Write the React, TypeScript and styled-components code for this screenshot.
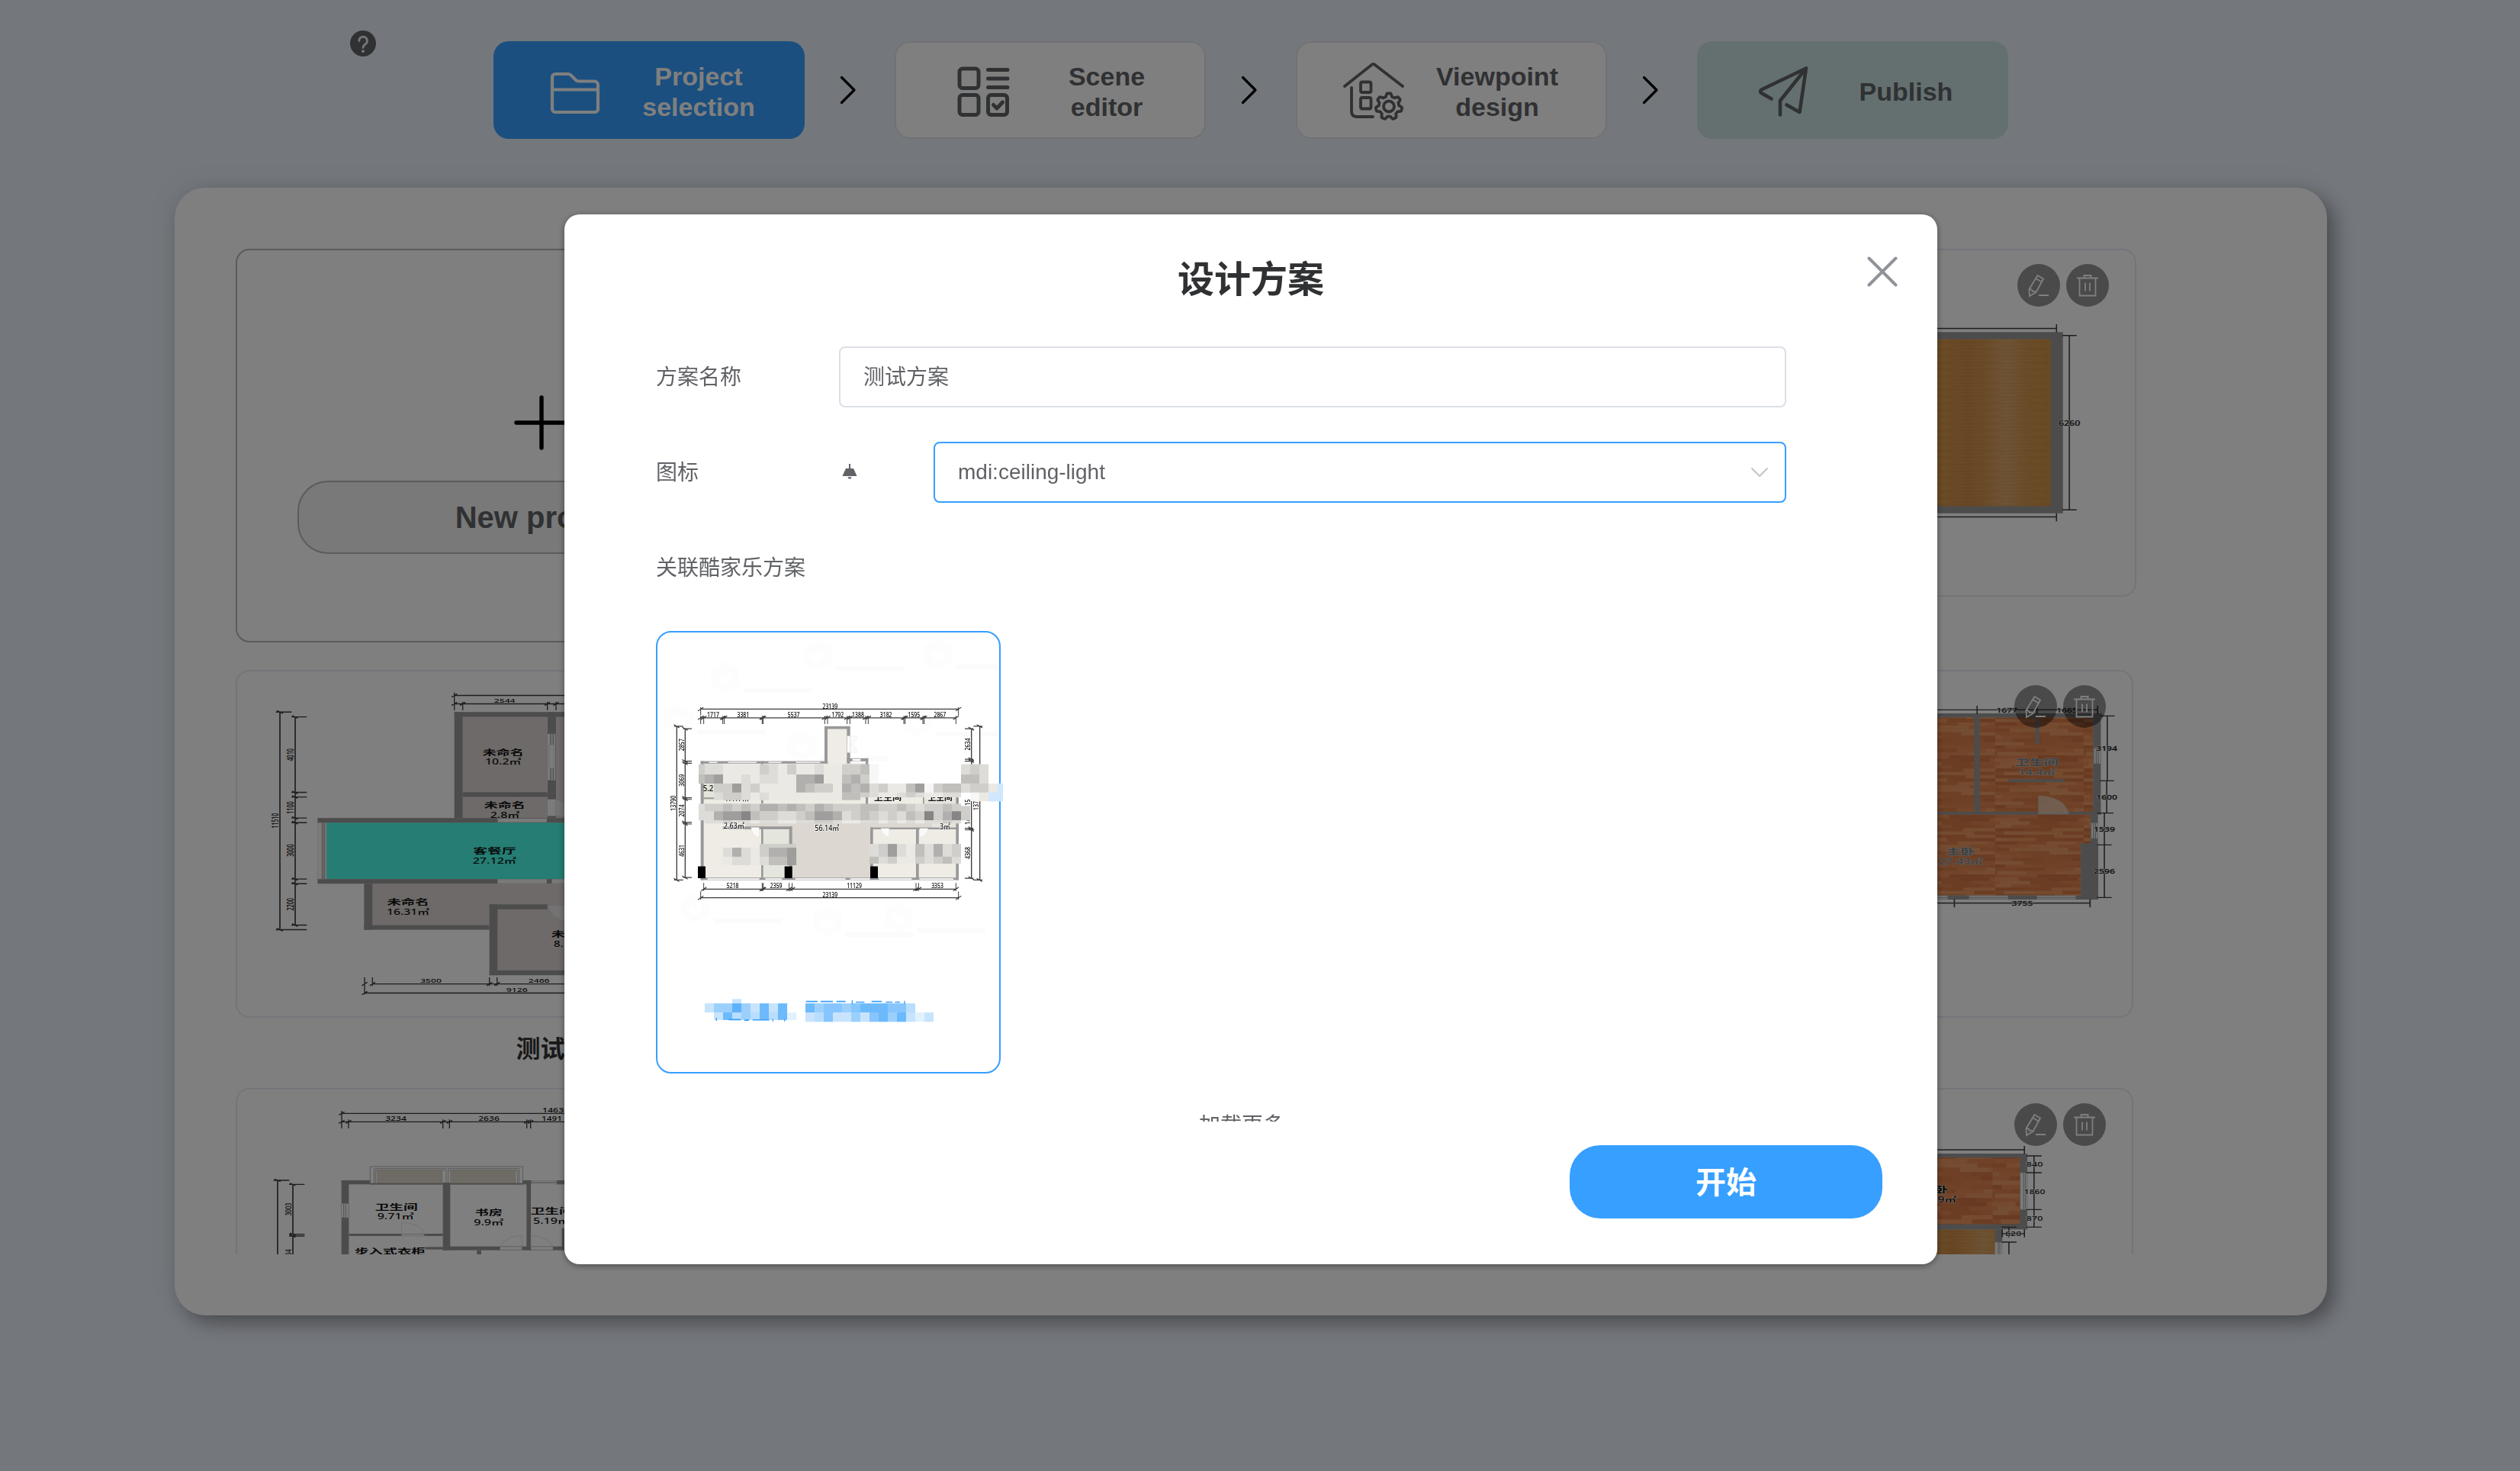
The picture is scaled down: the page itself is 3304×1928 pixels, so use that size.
import React from "react";
import styled, { createGlobalStyle } from "styled-components";

const SANS = '"Liberation Sans", "Noto Sans CJK SC", sans-serif';

const GlobalStyle = createGlobalStyle`
  * { box-sizing: border-box; }
  body { margin: 0; background: #e8eef8; font-family: ${SANS}; overflow: hidden; }
`;

/* ---------- page ---------- */

const Page = styled.div`
  width: 3304px;
  height: 1928px;
  background: #e8eef8;
  color: #606266;
  overflow: hidden;
`;

const Header = styled.header`
  display: flex;
  align-items: flex-start;
  height: 246px;
  padding: 40px 0 0 459px;
`;

const HelpIcon = styled.svg`
  flex: none;
  width: 34px;
  height: 34px;
  margin-right: 154px;
`;

const Stepper = styled.nav`
  display: flex;
  align-items: center;
  margin-top: 14px;
`;

const Step = styled.div<{ $kind: "active" | "plain" | "publish"; $inset: number }>`
  display: flex;
  align-items: center;
  gap: 32px;
  width: 408px;
  height: 128px;
  padding-left: ${(p) => p.$inset}px;
  border-radius: 20px;
  background: ${(p) => (p.$kind === "active" ? "#369fff" : p.$kind === "publish" ? "#c8e0e0" : "#fff")};
  color: ${(p) => (p.$kind === "active" ? "#fff" : "#606266")};
  box-shadow: ${(p) => (p.$kind === "plain" ? "inset 0 0 0 2px #e0e3e8" : "none")};
`;

const StepGlyph = styled.svg`
  flex: none;
  width: 80px;
  height: 80px;
  fill: none;
  stroke: currentColor;
  stroke-linecap: round;
  stroke-linejoin: round;
`;

const StepLabel = styled.span`
  width: 180px;
  padding-top: 3px;
  font-size: 34px;
  line-height: 40px;
  font-weight: 700;
  text-align: center;
  white-space: pre-line;
`;

const StepArrow = styled.svg`
  width: 22px;
  height: 38px;
  margin: 0 50px 0 46px;
  fill: none;
  stroke: #000;
  stroke-width: 3.2;
  stroke-linecap: round;
  stroke-linejoin: round;
`;

const Panel = styled.main`
  width: 2822px;
  height: 1478px;
  margin-left: 229px;
  padding: 80px;
  border-radius: 40px;
  background: #fff;
  box-shadow: 10px 10px 24px rgba(0, 0, 0, 0.36), -6px -6px 30px rgba(120, 150, 180, 0.08);
`;

const ProjectList = styled.div`
  height: 1318px;
  overflow: hidden;
`;

const ProjectRow = styled.div<{ $width: number; $height: number }>`
  display: flex;
  justify-content: space-between;
  align-items: flex-start;
  width: ${(p) => p.$width}px;
  height: ${(p) => p.$height}px;
`;

const NewProject = styled.div`
  display: flex;
  flex-direction: column;
  align-items: center;
  width: 802px;
  height: 516px;
  padding-top: 190px;
  border: 2px solid #b6b6b6;
  border-radius: 18px;
`;

const PlusIcon = styled.svg`
  width: 72px;
  height: 72px;
  stroke: #000;
  stroke-width: 5.4;
  stroke-linecap: round;
`;

const NewProjectButton = styled.button`
  width: 640px;
  height: 96px;
  margin-top: 40px;
  border: 2px solid #b6b6b6;
  border-radius: 40px;
  background: #f2f2f2;
  color: #606266;
  font: 700 40px ${SANS};
`;

const ProjectCard = styled.article`
  width: 802px;
`;

const Thumb = styled.div`
  display: grid;
  height: 456px;
  border: 2px solid #e9e9f4;
  border-radius: 18px;
  > * { grid-area: 1 / 1; }
`;

const CardActions = styled.div`
  display: flex;
  gap: 8px;
  justify-self: end;
  align-self: start;
  margin: 18px 34px 0 0;
`;

const RoundAction = styled.button`
  display: flex;
  align-items: center;
  justify-content: center;
  width: 56px;
  height: 56px;
  padding: 0;
  border: 0;
  border-radius: 50%;
  background: rgba(0, 0, 0, 0.42);
  svg {
    width: 32px;
    height: 32px;
    fill: none;
    stroke: #fff;
    stroke-width: 1.8;
  }
`;

const Caption = styled.h3`
  margin: 0;
  height: 80px;
  padding-right: 3px;
  line-height: 82px;
  font-size: 32px;
  font-weight: 700;
  text-align: center;
  color: #333;
`;

const Drawing = styled.svg`
  display: block;
  width: 100%;
  height: 100%;
  font-family: "Noto Sans", "Noto Sans CJK SC", sans-serif;
`;

/* ---------- dialog ---------- */

const Overlay = styled.div`
  position: fixed;
  inset: 0;
  display: flex;
  justify-content: center;
  align-items: flex-start;
  padding: 281px 24px 0 0;
  background: rgba(0, 0, 0, 0.5);
`;

const Dialog = styled.section`
  display: flex;
  flex-direction: column;
  width: 1800px;
  height: 1376px;
  padding: 44px 72px 60px 120px;
  border-radius: 20px;
  background: #fff;
  color: #606266;
  font-size: 28px;
  box-shadow: 0 2px 8px rgba(0, 0, 0, 0.4);
`;

const DialogHead = styled.header`
  display: grid;
  grid-template-columns: 1fr auto;
  align-items: start;
  height: 129px;
`;

const DialogTitle = styled.h2`
  margin: 0 0 0 -28px;
  font-size: 48px;
  line-height: 83px;
  font-weight: 700;
  text-align: center;
  color: #303133;
`;

const CloseIcon = styled.svg`
  width: 40px;
  height: 40px;
  margin: 11px -20px 0 0;
  stroke: #909399;
  stroke-width: 4;
  stroke-linecap: round;
`;

const Form = styled.div`
  height: 1016px;
  overflow: hidden;
`;

const Field = styled.div`
  display: flex;
  align-items: center;
  height: 80px;
  margin-bottom: 45px;
`;

const FieldLabel = styled.label`
  flex: none;
  width: 240px;
  padding-bottom: 4px;
`;

const FieldControl = styled.div`
  display: flex;
  align-items: center;
  width: 1242px;
`;

const Box = styled.div<{ $focused?: boolean }>`
  display: flex;
  flex: 1;
  align-items: center;
  justify-content: space-between;
  height: 80px;
  padding: 0 21px ${(p) => (p.$focused ? 0 : 4)}px 30px;
  border: 2px solid ${(p) => (p.$focused ? "#369fff" : "#dcdfe6")};
  border-radius: 8px;
`;

const LampIcon = styled.svg`
  width: 28px;
  height: 28px;
  margin: 0 96px 2px 0;
  fill: #606266;
`;

const CaretIcon = styled.svg`
  width: 24px;
  height: 14px;
  fill: none;
  stroke: #c0c4cc;
  stroke-width: 2;
  stroke-linecap: round;
  stroke-linejoin: round;
`;

const SchemeCard = styled.div`
  width: 452px;
  height: 580px;
  margin-top: -2px;
  border: 2px solid #369fff;
  border-radius: 20px;
  svg { overflow: visible; }
`;

const LoadMore = styled.div`
  width: 1536px;
  margin-top: 49px;
  line-height: 40px;
  text-align: center;
`;

const StartButton = styled.button`
  align-self: flex-end;
  width: 410px;
  height: 96px;
  margin-top: 31px;
  padding: 0 0 4px;
  border: 0;
  border-radius: 40px;
  background: #369fff;
  color: #fff;
  font: 700 40px ${SANS};
`;

/* ---------- step glyphs ---------- */

const gearPath = (() => {
  const pts: string[] = [];
  for (let i = 0; i < 140; i++) {
    const a = (i / 140) * Math.PI * 2 - Math.PI / 2;
    const wave = Math.max(-1, Math.min(1, 1.8 * Math.cos(7 * (a + Math.PI / 2))));
    const r = 15.2 + 2 * wave;
    pts.push(`${(60 + r * Math.cos(a)).toFixed(2)} ${(61.5 + r * Math.sin(a)).toFixed(2)}`);
  }
  return `M${pts.join("L")}Z`;
})();

const FolderGlyph = () => (
  <StepGlyph viewBox="0 0 80 80" strokeWidth="4.2">
    <path d="M10 23a4 4 0 0 1 4-4h17q2.500 0 4 2l6 6q1.500 1.500 4 1.500h20a5 5 0 0 1 5 5V65a4 4 0 0 1-4 4H14a4 4 0 0 1-4-4ZM10 39.500H70" />
  </StepGlyph>
);

const SceneGlyph = () => (
  <StepGlyph viewBox="0 0 80 80" strokeWidth="5">
    <rect x="9" y="12" width="25" height="25.500" rx="4" />
    <rect x="9" y="46.500" width="25" height="26" rx="4" />
    <rect x="46.500" y="46.500" width="25" height="26" rx="4" />
    <path d="M46.500 13.500H72M46.500 25H72M46.500 36.500H72" />
    <path d="M53.500 59.500l4.500 4.500 7.500-8" />
  </StepGlyph>
);

const HouseGlyph = () => (
  <StepGlyph viewBox="0 0 80 80" strokeWidth="3.8">
    <path d="M2 35L38 6.500q1.500-1 3 0L78 35M11 37V68q0 7 7 7H39" />
    <rect x="23" y="29.500" width="13.500" height="13.500" rx="2" />
    <rect x="23" y="50" width="13.500" height="14.500" rx="2" />
    <path d={gearPath} />
    <circle cx="60" cy="61.500" r="7" />
  </StepGlyph>
);

const PlaneGlyph = () => (
  <StepGlyph viewBox="0 0 80 80" strokeWidth="4.600">
    <path d="M25.500 51.500L12.500 44q-3-2 0-4.500L71 11.500L62.500 69L45.500 59.500M71 11.500L37 54V72.500" />
  </StepGlyph>
);

const steps = [
  { label: "Project\nselection", kind: "active" as const, inset: 67, glyph: <FolderGlyph /> },
  { label: "Scene\neditor", kind: "plain" as const, inset: 76, glyph: <SceneGlyph /> },
  { label: "Viewpoint\ndesign", kind: "plain" as const, inset: 62, glyph: <HouseGlyph /> },
  { label: "Publish", kind: "publish" as const, inset: 72, glyph: <PlaneGlyph /> },
];

/* ---------- floor plan primitives ---------- */

const WALL = "#999";

type TP = { x: number; y: number; w?: number; s: number; t: string; r?: boolean; a?: "start" | "middle" | "end"; c?: string; b?: boolean; halo?: string };
const T = ({ x, y, w, s, t, r, a = "middle", c = "#111", b, halo }: TP) => (
  <text
    x={x}
    y={y}
    fontSize={s}
    textAnchor={a}
    fill={c}
    fontWeight={b ? 700 : 500}
    textLength={w}
    lengthAdjust="spacingAndGlyphs"
    transform={r ? `rotate(-90 ${x} ${y})` : undefined}
    stroke={halo}
    strokeWidth={halo ? 3 : undefined}
    paintOrder="stroke"
  >
    {t}
  </text>
);

/* each entry: x, y, width, height */
const Boxes = ({ list, fill, stroke }: { list: number[][]; fill: string; stroke?: string }) => (
  <>
    {list.map((b, i) => (
      <rect key={i} x={b[0]} y={b[1]} width={b[2]} height={b[3]} fill={fill} stroke={stroke} />
    ))}
  </>
);

const Lines = ({ d, w = 4, c = "#3c3c3c" }: { d: string; w?: number; c?: string }) => (
  <path d={d} stroke={c} strokeWidth={w} fill="none" />
);

/* horizontal dimension with slashes at each stop */
const hDim = (y: number, stops: number[], up: number, down: number) =>
  stops.map((x) => `M${x} ${y - up}V${y + down}M${x - 11} ${y + 6}L${x + 11} ${y - 6}`).join("");
const vDim = (x: number, stops: number[], left: number, right: number) =>
  stops.map((y) => `M${x - left} ${y}H${x + right}M${x - 12} ${y - 5}L${x + 10} ${y + 5}`).join("");

const plankColors = ["#e58b57", "#dc804b", "#ea9660", "#d27544", "#e08652", "#e89b66", "#d67b46"];
const Planks = ({ id, bw, bh }: { id: string; bw: number; bh: number }) => {
  const cells = [];
  for (let row = 0; row < 18; row++) {
    for (let col = 0; col < 4; col++) {
      const shift = (row * 37) % 100;
      const color = plankColors[(row * 5 + col * 3 + ((row * col) % 4)) % plankColors.length];
      cells.push(<rect key={`${row}-${col}`} x={(col - 1) * bw + (shift * bw) / 100} y={row * bh} width={bw + 1} height={bh + 0.5} fill={color} />);
    }
  }
  return (
    <pattern id={id} width={bw * 3} height={bh * 18} patternUnits="userSpaceOnUse">
      <rect width={bw * 3} height={bh * 18} fill="#dc824c" />
      {cells}
    </pattern>
  );
};

const GoldWood = ({ id, x1, x2 }: { id: string; x1: number; x2: number }) => (
  <>
    <linearGradient id={`${id}-base`} gradientUnits="userSpaceOnUse" x1={x1} y1="0" x2={x2} y2="0">
      <stop offset="0" stopColor="#d6984e" />
      <stop offset="0.25" stopColor="#d6984e" />
      <stop offset="0.39" stopColor="#d08c48" />
      <stop offset="0.5" stopColor="#d6964e" />
      <stop offset="0.65" stopColor="#dca96e" />
      <stop offset="0.78" stopColor="#d69a52" />
      <stop offset="1" stopColor="#d4944a" />
    </linearGradient>
    <pattern id={`${id}-grain`} width="160" height="24" patternUnits="userSpaceOnUse">
      <path d="M0 3H110M60 11H160M0 17H160" stroke="#b87434" strokeWidth="1.600" opacity=".5" />
      <path d="M20 7H150M0 21H90" stroke="#e6b070" strokeWidth="1.400" opacity=".35" />
    </pattern>
  </>
);

/* ---------- floor plans ---------- */

const PlanApartment = () => (
  <Drawing viewBox="311 880 798 452" preserveAspectRatio="none">
    <g transform="translate(290 860) scale(.33333 .35714)">
      <Boxes fill="#dcd4d2" list={[[950, 223, 331, 276], [950, 517, 331, 77], [1317, 223, 200, 371], [595, 835, 800, 152], [1087, 929, 300, 224]]} />
      <Boxes fill="#4afae6" list={[[415, 611, 1100, 207]]} />
      <Boxes
        fill={WALL}
        list={[
          [917, 205, 33, 389], [917, 205, 500, 18], [1283, 205, 34, 389], [950, 499, 333, 18],
          [379, 594, 1000, 17], [379, 818, 708, 17], [1281, 818, 20, 17],
          [562, 835, 33, 169], [562, 987, 493, 17], [1055, 911, 32, 260], [1055, 911, 228, 18], [1055, 1153, 400, 18],
        ]}
      />
      <Boxes fill="#f6f6f6" stroke="#aaa" list={[[1087, 596, 194, 14], [1087, 820, 194, 14], [1300, 820, 120, 14], [379, 611, 35, 207], [1283, 285, 32, 171], [1283, 525, 34, 62], [1290, 325, 20, 87]]} />
      <path d="M1317 527q40 4 60 60h-60Z M1283 914h90v60q-75-5-90-60Z" fill="#e8e4e4" stroke="#b8b8b8" />
      <Lines w={5} c="#aaa" d="M398 611V818M406 611V818M1296 285V325M1306 285V325M1296 412V456M1306 412V456" />
      <Lines d={`M917 144H1400${hDim(144, [917], 10, 55)}M917 175H1400${hDim(175, [950, 1283, 1317], 8, 24)}M906 181L928 169`} />
      <Lines w={5} d="M231 205V1004M291 223V987" />
      <Lines d={`M215 205H277M215 1004H337M219 200L243 210M219 999L243 1009${vDim(291, [223, 500, 517, 594, 611, 818, 835, 987], 15, 46)}`} />
      <Lines d={`M595 1203H1400${hDim(1203, [564, 595, 1055, 1085], 24, 7)}M564 1200V1242M553 1242L575 1230M564 1236H1400`} />
      <T x={1115} y={171} w={83} s={22} t="2544" />
      <T x={825} y={1199} w={83} s={22} t="3500" />
      <T x={1250} y={1199} w={83} s={22} t="2466" />
      <T x={1163} y={1231} w={84} s={22} t="9126" />
      <T r x={224} y={604} w={55} s={36} t="11510" />
      <T r x={284} y={362} w={46} s={36} t="4010" />
      <T r x={284} y={556} w={46} s={36} t="1100" />
      <T r x={284} y={713} w={46} s={36} t="3000" />
      <T r x={284} y={911} w={46} s={36} t="2200" />
      <T b x={1109} y={363} w={162} s={28} t="未命名" />
      <T x={1109} y={399} w={142} s={28} t="10.2㎡" />
      <T b x={1115} y={557} w={162} s={28} t="未命名" />
      <T x={1116} y={593} w={116} s={28} t="2.8㎡" />
      <T b x={1075} y={726} w={168} s={28} t="客餐厅" />
      <T x={1075} y={763} w={172} s={28} t="27.12㎡" />
      <T b x={735} y={913} w={165} s={28} t="未命名" />
      <T x={735} y={949} w={168} s={28} t="16.31㎡" />
      <T b a="start" x={1298} y={1031} w={162} s={28} t="未命名" />
      <T a="start" x={1308} y={1067} w={38} s={28} t="8." />
    </g>
  </Drawing>
);

const PlanSuite = () => (
  <Drawing viewBox="311 1428 798 452" preserveAspectRatio="none">
    <g transform="translate(290 1400) scale(.33333)">
      <path d="M586 452V387H1186V452M601 452V395H885V452M893 452V395H1172V452M607 452V402H878M898 402H1166V452" fill="none" stroke="#b4b4b4" strokeWidth="3" />
      <Boxes fill="#dcd6c8" stroke="#c0b8a8" list={[[614, 402, 256, 53], [902, 402, 256, 53]]} />
      <Boxes
        fill={WALL}
        list={[
          [473, 441, 29, 400], [473, 441, 113, 16], [586, 452, 600, 6], [872, 450, 29, 266], [502, 651, 370, 9],
          [1186, 441, 34, 16], [1201, 441, 17, 275], [1320, 441, 60, 16], [872, 701, 500, 15], [803, 703, 70, 10],
          [1340, 630, 30, 86], [1006, 716, 17, 100],
        ]}
      />
      <Boxes fill="#fafafa" stroke="#aaa" list={[[473, 532, 28, 56], [1220, 443, 100, 12], [1097, 702, 86, 13], [1218, 702, 87, 13], [709, 652, 90, 8]]} />
      <Lines w={3} c="#aaa" d="M482 532V588M490 532V588M1220 449H1320" />
      <Lines w={2} c="#d4d4d4" d="M709 656V606Q790 612 799 652M1183 702V658Q1110 664 1097 702M1218 702V658Q1295 666 1305 702" />
      <Lines d={`M474 178H1400${hDim(178, [474], 10, 59)}M474 211H1400${hDim(211, [501, 872, 898, 1202, 1217], 9, 26)}M463 217L485 205`} />
      <Lines w={5} d="M222 441V800M282 457V653M282 660V800" />
      <Lines d={`M206 441H268M210 436L234 446${vDim(282, [457, 653, 660], 15, 46)}`} />
      <T a="start" x={1263} y={174} w={106} s={24} t="14636" />
      <T x={687} y={208} w={83} s={24} t="3234" />
      <T x={1053} y={208} w={83} s={24} t="2636" />
      <T a="start" x={1260} y={208} w={81} s={24} t="1491" />
      <T r x={275} y={555} w={50} s={34} t="3003" />
      <T r x={275} y={725} w={26} s={34} t="34" />
      <T b x={689} y={557} w={168} s={31} t="卫生间" />
      <T x={686} y={595} w={144} s={30} t="9.71㎡" />
      <T b x={1052} y={580} w={108} s={31} t="书房" />
      <T x={1052} y={619} w={117} s={30} t="9.9㎡" />
      <T b a="start" x={1217} y={574} w={168} s={31} t="卫生间" />
      <T a="start" x={1227} y={612} w={144} s={30} t="5.19㎡" />
      <T b x={664} y={733} w={280} s={31} t="步入式衣柜" />
    </g>
  </Drawing>
);

const PlanStudio = () => (
  <Drawing viewBox="2001 328 798 452" preserveAspectRatio="none">
    <defs>
      <GoldWood id="studio" x1={0} x2={520} />
    </defs>
    <g transform="translate(2500 230) scale(.38265 .3699)">
      <Boxes fill={WALL} list={[[-700, 555, 1235, 642]]} />
      <Boxes fill="url(#studio-base)" list={[[-660, 580, 1154, 592]]} />
      <Boxes fill="url(#studio-grain)" list={[[-660, 580, 1154, 592]]} />
      <Lines w={4} d="M-700 542H513M513 527V556M-700 1210H513M513 1197V1225M557 567V1185M533 567H582M533 1185H582" />
      <T x={557} y={886} w={74} s={23} t="6260" halo="#ddd" />
    </g>
  </Drawing>
);

const PlanMaster = () => (
  <Drawing viewBox="1997 880 798 452" preserveAspectRatio="none">
    <defs>
      <Planks id="planks-master" bw={101} bh={13} />
    </defs>
    <g transform="translate(2500 860) scale(.38265 .33333)">
      <path d="M-200 241H638V613H630V738H596V941H-200Z" fill="url(#planks-master)" />
      <Boxes
        fill={WALL}
        list={[
          [-200, 225, 868, 16], [638, 225, 27, 398], [231, 240, 19, 375], [-200, 612, 865, 11], [630, 617, 25, 121],
          [596, 736, 60, 221], [-200, 941, 856, 16], [440, 241, 14, 105], [346, 484, 195, 11],
        ]}
      />
      <Boxes fill="#f2f2f2" stroke="#aaa" list={[[641, 362, 23, 61], [632, 656, 22, 61], [-60, 942, 200, 13], [213, 942, 134, 13], [446, 942, 133, 13]]} />
      <Lines w={3} c="#999" d="M649 362V423M656 362V423M640 656V717M647 656V717M-60 949H140M213 949H347M446 949H579" />
      <path d="M451 621V549Q540 552 556 621Z" fill="#e6cdb8" fillOpacity=".75" stroke="#c8b8a8" strokeWidth="2" />
      <Lines d="M-200 211H654M241 195V228M446 195V228M654 195V228" />
      <Lines d="M687 235V490M685 490V617M677 617V949M665 235H712M662 490H710M652 617H708M652 742H702M652 949H702" />
      <Lines w={5} c="#555" d="M-200 971H628M163 955V988M628 955V988" />
      <T x={343} y={221} w={72} s={24} t="1677" halo="#ddd" />
      <T x={549} y={221} w={72} s={24} t="1665" halo="#ddd" />
      <T x={685} y={372} w={73} s={24} t="3194" halo="#ddd" />
      <T x={685} y={563} w={73} s={24} t="1600" halo="#ddd" />
      <T x={677} y={689} w={73} s={24} t="1539" halo="#ddd" />
      <T x={677} y={855} w={73} s={24} t="2596" halo="#ddd" />
      <T x={396} y={982} w={73} s={24} t="3755" halo="#ddd" />
      <T b x={446} y={429} w={148} s={32} t="卫生间" c="#7a7f84" halo="#ccbdb2" />
      <T x={445} y={468} w={126} s={30} t="14.4㎡" c="#7a7f84" halo="#ccbdb2" />
      <T b x={184} y={781} w={97} s={32} t="主卧" c="#7a7f84" halo="#ccbdb2" />
      <T x={185} y={819} w={150} s={30} t="27.43㎡" c="#7a7f84" halo="#ccbdb2" />
    </g>
  </Drawing>
);

const PlanBedroom = () => (
  <Drawing viewBox="1997 1428 798 452" preserveAspectRatio="none">
    <defs>
      <Planks id="planks-bedroom" bw={98} bh={17} />
      <GoldWood id="annex" x1={0} x2={400} />
    </defs>
    <g transform="translate(2500 1400) scale(.38265 .33333)">
      <Boxes fill={WALL} list={[[-200, 336, 613, 298], [-200, 634, 527, 50]]} />
      <Boxes fill="url(#planks-bedroom)" list={[[-200, 352, 588, 262]]} />
      <Boxes fill="url(#annex-base)" list={[[-200, 635, 502, 300]]} />
      <Boxes fill="url(#annex-grain)" list={[[-200, 635, 502, 300]]} />
      <Boxes fill="#f4f4f4" stroke="#aaa" list={[[389, 411, 24, 145], [303, 684, 24, 200]]} />
      <Lines w={3} c="#aaa" d="M401 411V556M407 411V556M313 684V800M319 684V800" />
      <Lines d="M-200 321H403M403 306V337M436 345V625M410 345H462M410 411H462M410 556H462M410 625H462M327 634V665M403 634V665M327 651H403M350 625V665M350 684V800M325 684H376M325 625H376" />
      <T x={438} y={388} w={56} s={24} t="840" halo="#fff" />
      <T x={438} y={495} w={72} s={24} t="1860" halo="#fff" />
      <T x={438} y={601} w={56} s={24} t="870" halo="#fff" />
      <T x={365} y={660} w={56} s={24} t="620" halo="#fff" />
      <T b a="end" x={142} y={490} w={97} s={32} t="主卧" halo="#f4d8c4" />
      <T a="end" x={170} y={528} w={64} s={30} t="9㎡" halo="#f4d8c4" />
    </g>
  </Drawing>
);

/* ---------- scheme thumbnail with censored cells ---------- */

const shades: Record<string, string> = {
  W: "#f7f7f7", L: "#ebe9e4", M: "#dedcd8", N: "#d0cecb", O: "#c1bfbc", P: "#b2b0ae", Q: "#9f9e9d", R: "#868686",
  B: "#cfe7ff",
  a: "#5eb1fb", b: "#6cbafc", c: "#86c5fd", d: "#9bd0fd", e: "#b8ddfd", f: "#c8e4fd", g: "#e2f1ff",
};

/* first column, top, height, one letter per 36-unit cell */
const mosaic: [number, number, number, string][] = [
  [6, 494, 33, "NMMLLLLNMLNLLMLLNNOW"],
  [6, 527, 29, "OPQLLMLMMLLPPQLLOPNW"],
  [8, 556, 29, "NNQMNLLLLPONNLPOPMNLLOQWNOO"],
  [8, 585, 24, "MNNMLMLLLLLLLLOO"],
  [24, 585, 15, "NMLLMNMLLMM"],
  [35, 494, 33, "MNM"],
  [35, 527, 29, "OOM"],
  [35, 556, 29, "MNNLB"],
  [36, 585, 28, "WLBB"],
  [6, 621, 24, "MNNONONPPOPONPONNNOONNONMNNON"],
  [6, 645, 29, "MMPQQRONNMMNOQQPMNONMNMONRNPR"],
  [35, 628, 46, "N"],
  [7, 674, 10, "MMNMMLMMLLMMNNMLLMMLMLMLMMNM"],
  [13, 750, 12, "NNNN"],
  [9, 762, 29, "MPMLNPPQ"],
  [9, 791, 27, "LMMLMOOQ"],
  [25, 750, 41, "MNQMLOMPMN"],
  [25, 791, 22, "OMNLLNMNOM"],
  [10, 1248, 14, "f"],
  [7, 1262, 29, "fddadfbfb"],
  [18, 1262, 29, "bdccdcbbbcce"],
  [8, 1291, 24, "fbedebebg"],
  [18, 1291, 30, "fecffdfcbdbfgf"],
];

const Censor = () => (
  <g clipPath="url(#censor-bounds)">
    {mosaic.map(([col, y, h, row], i) =>
      row.split("").map((k, j) => <rect key={`${i}-${j}`} x={(col + j) * 36} y={y} width="36.300" height={h + 0.3} fill={shades[k]} />)
    )}
  </g>
);

const PlanScheme = () => (
  <Drawing viewBox="862 829 448 576" preserveAspectRatio="none">
    <defs>
      <clipPath id="censor-bounds">
        <rect x="228" y="480" width="1197" height="850" rx="12" />
      </clipPath>
    </defs>
    <g transform="translate(840 800) scale(.33333 .40816)">
      <g fill="#fdfdfd">
        {[[697, 145], [1170, 140], [332, 215], [150, 350], [632, 435], [1090, 355], [215, 955], [735, 1000], [1015, 985]].map(([x, y], i) => (
          <g key={i}>
            <path d={`M${x} ${y - 50}l55 25v50l-55 25l-55-25v-50Z`} />
            <rect x={x + 72} y={y + 34} width={Math.min(268, 1405 - x - 72)} height="16" fill="#fbfbfb" />
            <path d={`M${x - 27} ${y}q14-18 27 0q14-18 27 0q-27 50-54 0Z`} fill="#fff" />
          </g>
        ))}
      </g>
      <Boxes fill="#efece6" list={[[247, 490, 645, 370], [735, 380, 77, 112], [900, 600, 350, 260]]} />
      <Boxes fill="#e4e5dc" list={[[247, 490, 76, 112], [482, 705, 102, 153], [1113, 605, 130, 90]]} />
      <path d="M440 640H1145V697H903V858H595V695H412V640Z" fill="#dcd7d1" />
      <Boxes
        fill={WALL}
        list={[
          [236, 484, 12, 382], [236, 484, 500, 8], [723, 372, 12, 120], [723, 372, 101, 9], [811, 372, 13, 120], [811, 475, 84, 10], [885, 475, 10, 160],
          [474, 484, 8, 136], [247, 601, 76, 5], [323, 694, 272, 9], [474, 694, 8, 166], [584, 694, 12, 166],
          [903, 697, 348, 6], [903, 697, 11, 166], [1083, 700, 11, 163], [1240, 600, 11, 266], [1110, 600, 5, 30], [236, 858, 1015, 8],
        ]}
      />
      <Boxes fill="#fff" stroke="#b5b5b5" list={[[268, 486, 34, 4], [344, 486, 112, 4], [502, 486, 52, 4], [610, 486, 96, 4], [812, 403, 12, 54], [833, 477, 32, 7], [263, 860, 204, 5], [490, 860, 66, 5], [608, 860, 198, 5], [824, 860, 78, 5], [936, 860, 130, 5], [1096, 860, 134, 5]]} />
      <path d="M824 403q20 2 28 0q-8 24-28 26q22 4 28 27h-28M466 697v30q-28-3-32-30ZM977 700v27q-28-3-32-27ZM1098 727v-27h32q-3 24-32 27Z" fill="#fafafa" stroke="#ddd" />
      <Boxes fill="#000" list={[[225, 822, 30, 38], [566, 822, 30, 38], [903, 822, 30, 38]]} />
      <Lines w={3} d={`M236 317H1250${hDim(317, [236, 1250], 6, 20)}M236 345H1242${hDim(345, [236, 248, 323, 329, 478, 482, 724, 735, 812, 823, 885, 895, 1035, 1040, 1110, 1115, 1240], 6, 20)}`} />
      <Lines w={3} d={`M248 895H1242${hDim(895, [248, 478, 482, 584, 596, 1083, 1093, 1240], 20, 6)}M236 923H1250${hDim(923, [236, 1250], 20, 6)}`} />
      <Lines w={4} d={`M142 372V866M175 380V858M1301 380V860M1334 372V866`} />
      <Lines w={3} d={`${vDim(142, [372, 866], 10, 25)}${vDim(175, [380, 484, 491, 602, 607, 681, 686, 858], 8, 26)}${vDim(1301, [380, 478, 484, 700, 705, 860], 26, 8)}${vDim(1334, [372, 866], 25, 10)}`} />
      {[["23139", 745, 315], ["1717", 285, 343], ["3381", 403, 343], ["5537", 602, 343], ["1792", 775, 343], ["1388", 855, 343], ["3182", 965, 343], ["1595", 1075, 343], ["2867", 1177, 343], ["5218", 362, 892], ["2359", 533, 892], ["11129", 840, 892], ["3353", 1167, 892], ["23139", 745, 920]].map(([t, x, y], i) => (
        <T key={i} t={t as string} x={x as number} y={y as number} w={(t as string).length * 11.8} s={20} c="#000" />
      ))}
      {[["2857", 171, 432], ["3069", 171, 546], ["2074", 171, 643], ["4631", 171, 772], ["13790", 137, 619], ["2634", 1296, 430], ["1499", 1296, 668], ["4368", 1296, 779], ["137", 1330, 627], ["15", 1296, 617]].map(([t, x, y], i) => (
        <T key={i} r t={t as string} x={x as number} y={y as number} w={(t as string).length * 9.8} s={25} c="#000" />
      ))}
      <T a="start" x={245} y={580} s={26} w={58} t="5.27" />
      <T x={378} y={612} s={24} w={96} t="17.17㎡" />
      <T b x={972} y={611} s={28} w={108} t="卫生间" />
      <T b x={1178} y={611} s={28} w={96} t="卫生间" />
      <Censor />
      <T x={367} y={701} s={26} w={82} t="2.63㎡" halo="#fff" />
      <T x={733} y={708} s={26} w={96} t="56.14㎡" halo="#fff" />
      <T x={1197} y={703} s={26} w={40} t="3㎡" halo="#fff" />
      <path d="M650 1256h46M708 1256h48M770 1256h36M832 1252v12M846 1258h34M908 1256h40M964 1258h26M1000 1258h20M1038 1254v10M298 1308v10M346 1314h48M408 1316h18M440 1315h66M520 1312v8M566 1312v8" stroke="#369fff" strokeWidth="4" />
    </g>
  </Drawing>
);

/* ---------- composition ---------- */

const Actions = () => (
  <CardActions>
    <RoundAction aria-label="edit">
      <svg viewBox="0 0 32 32">
        <path d="M15.500 3.500L23 8L13.500 25.500L5 30.500L4.500 21.500ZM13 7.500L20.800 12M4.500 21.500Q8 21 9 24.500Q12 23.500 13.500 25.500M17 29.500H30" transform="translate(-1 -.5)" />
      </svg>
    </RoundAction>
    <RoundAction aria-label="delete">
      <svg viewBox="0 0 32 32">
        <path d="M2 6.500H30M11.500 6V3H20.500V6M5.500 7V29.500H26.500V7M13 12.500V23.500M19 12.500V23.500" />
      </svg>
    </RoundAction>
  </CardActions>
);

const Project = ({ plan, name, actions }: { plan: React.ReactNode; name?: string; actions?: boolean }) => (
  <ProjectCard>
    <Thumb>
      {plan}
      {actions && <Actions />}
    </Thumb>
    {name && <Caption>{name}</Caption>}
  </ProjectCard>
);

export default function App() {
  return (
    <Page>
      <GlobalStyle />
      <Header>
        <HelpIcon viewBox="0 0 34 34">
          <circle cx="17" cy="17" r="17" fill="#606266" />
          <path d="M11.800 13.500a5.300 5.300 0 1 1 8.300 4.300c-2 1.400-3.100 2.300-3.100 4.600" fill="none" stroke="#e8eef8" strokeWidth="2.800" strokeLinecap="round" />
          <circle cx="17" cy="27.200" r="1.900" fill="#e8eef8" />
        </HelpIcon>
        <Stepper>
          {steps.map((s, i) => (
            <React.Fragment key={s.label}>
              {i > 0 && (
                <StepArrow viewBox="0 0 22 38">
                  <path d="M2.500 2.500L19 19L2.500 35.500" />
                </StepArrow>
              )}
              <Step $kind={s.kind} $inset={s.inset}>
                {s.glyph}
                <StepLabel>{s.label}</StepLabel>
              </Step>
            </React.Fragment>
          ))}
        </Stepper>
      </Header>

      <Panel>
        <ProjectList>
          <ProjectRow $width={2492} $height={552}>
            <NewProject>
              <PlusIcon viewBox="0 0 72 72">
                <path d="M36 3V69M3 36H69" />
              </PlusIcon>
              <NewProjectButton>New project</NewProjectButton>
            </NewProject>
            <Project plan={<PlanStudio />} actions />
          </ProjectRow>
          <ProjectRow $width={2488} $height={548}>
            <Project plan={<PlanApartment />} name="测试" />
            <Project plan={<PlanMaster />} actions />
          </ProjectRow>
          <ProjectRow $width={2488} $height={548}>
            <Project plan={<PlanSuite />} />
            <Project plan={<PlanBedroom />} actions />
          </ProjectRow>
        </ProjectList>
      </Panel>

      <Overlay>
        <Dialog>
          <DialogHead>
            <DialogTitle>设计方案</DialogTitle>
            <CloseIcon viewBox="0 0 40 40">
              <path d="M2.500 2.500L37.500 37.500M37.500 2.500L2.500 37.500" />
            </CloseIcon>
          </DialogHead>
          <Form>
            <Field>
              <FieldLabel>方案名称</FieldLabel>
              <FieldControl>
                <Box>测试方案</Box>
              </FieldControl>
            </Field>
            <Field>
              <FieldLabel>图标</FieldLabel>
              <FieldControl>
                <LampIcon viewBox="0 0 28 28">
                  <path d="M13 4h2v6h4l4.500 10h-19L9 10h4ZM11.500 21.200h5q-.4 2.500-2.500 2.500t-2.500-2.500Z" />
                </LampIcon>
                <Box $focused>
                  mdi:ceiling-light
                  <CaretIcon viewBox="0 0 24 14">
                    <path d="M2 2L12 12L22 2" />
                  </CaretIcon>
                </Box>
              </FieldControl>
            </Field>
            <Field>
              <FieldLabel>关联酷家乐方案</FieldLabel>
            </Field>
            <SchemeCard>
              <PlanScheme />
            </SchemeCard>
            <LoadMore>加载更多</LoadMore>
          </Form>
          <StartButton>开始</StartButton>
        </Dialog>
      </Overlay>
    </Page>
  );
}
